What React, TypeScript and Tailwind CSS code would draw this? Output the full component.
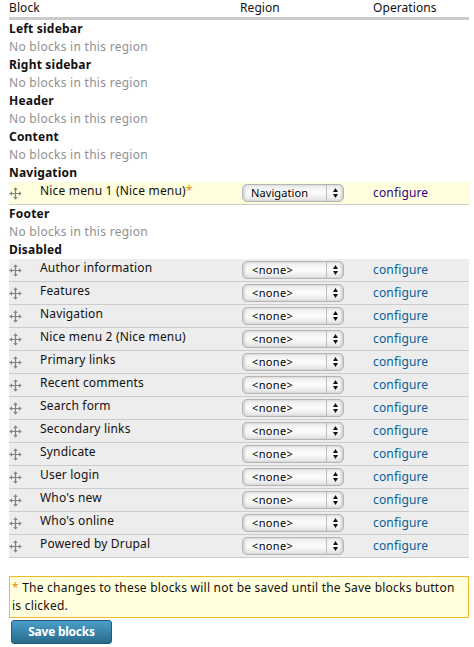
type RowProps = {
  name: string;
  region: string;
  changed?: boolean;
};

const emptyRegions = ["Left sidebar", "Right sidebar", "Header", "Content"];

const disabledBlocks = [
  "Author information",
  "Features",
  "Navigation",
  "Nice menu 2 (Nice menu)",
  "Primary links",
  "Recent comments",
  "Search form",
  "Secondary links",
  "Syndicate",
  "User login",
  "Who's new",
  "Who's online",
  "Powered by Drupal",
];

function DragHandle() {
  return (
    <svg className="mt-[5px] h-[13px] w-[13px] shrink-0" viewBox="0 0 13 13" fill="none">
      <path d="M6.5 1v11M1 6.5h11" stroke="#808080" strokeWidth="1.2" />
      <path
        d="M4.3 3L6.5 0.3l2.2 2.7zM4.3 10l2.2 2.7 2.2-2.7zM3 4.3L0.3 6.5l2.7 2.2zM10 4.3l2.7 2.2-2.7 2.2z"
        fill="#858585"
      />
    </svg>
  );
}

function RegionSelect({ value }: { value: string }) {
  const textStyle = value === "Navigation" ? "pl-[8px] tracking-[0.1px]" : "pl-[9px] tracking-[0.35px]";
  return (
    <div className="mt-[2px] flex h-[18px] w-[102px] overflow-hidden rounded-[5px] border border-[#b5b5b5] bg-linear-to-b from-[#ebebeb] via-[#fdfdfd] to-[#e2e2e2] shadow-[inset_2px_0_2px_#d2d2d2,inset_-2px_0_2px_#d2d2d2]">
      <span className={`w-[83px] text-[11px] leading-[15px] text-black ${textStyle}`}>{value}</span>
      <span className="flex flex-1 items-center justify-center border-l border-[#bcbcbc]">
        <svg className="h-[10px] w-[5px]" viewBox="0 0 5 10">
          <path d="M2.5 0L5 4H0zM0 6h5L2.5 10z" fill="#111" />
        </svg>
      </span>
    </div>
  );
}

function RegionTitle({ children }: { children: string }) {
  return <div className="h-[18px] text-[12px] leading-[18px] font-bold tracking-[0.2px] text-[#111]">{children}</div>;
}

function EmptyRegion({ title }: { title: string }) {
  return (
    <>
      <RegionTitle>{title}</RegionTitle>
      <div className="h-[18px] leading-[18px] tracking-[0.28px] text-[#909090]">No blocks in this region</div>
    </>
  );
}

function BlockRow({ name, region, changed = false }: RowProps) {
  return (
    <div
      className={`grid h-[23px] grid-cols-[31px_202px_131px_96px] border-b border-[#ccc] ${changed ? "bg-[#ffffdd]" : "bg-[#ededed]"}`}
    >
      <DragHandle />
      <div className="leading-[18px] tracking-[0.18px]">
        {name}
        {changed && <span className="text-[#e09010]">*</span>}
      </div>
      <RegionSelect value={region} />
      <a className={`leading-[22px] tracking-[0.15px] ${changed ? "text-[#330088]" : "text-[#0a5f99]"}`}>configure</a>
    </div>
  );
}

export default function App() {
  return (
    <div className="h-[647px] w-[474px] overflow-hidden bg-white pl-[9px] font-['Noto_Sans',sans-serif] text-[12px] tracking-[0.23px] text-[#111]">
      <div className="w-[460px]">
        <div className="grid h-[20px] grid-cols-[231px_133px_96px] border-b-3 border-[#ccc] leading-[16px] tracking-[0.08px]">
          <div>Block</div>
          <div>Region</div>
          <div>Operations</div>
        </div>
        {emptyRegions.map((title) => (
          <EmptyRegion key={title} title={title} />
        ))}
        <RegionTitle>Navigation</RegionTitle>
        <BlockRow name="Nice menu 1 (Nice menu)" region="Navigation" changed />
        <EmptyRegion title="Footer" />
        <RegionTitle>Disabled</RegionTitle>
        {disabledBlocks.map((name) => (
          <BlockRow key={name} name={name} region="<none>" />
        ))}
        <div className="mt-[18px] h-[42px] border border-[#efba2c] bg-[#ffffdd] px-[2px] py-[2px] leading-[18px]">
          <span className="text-[#e09010]">*</span> The changes to these blocks will not be saved until the Save blocks button
          <br />
          is clicked.
        </div>
        <button className="mt-[2px] ml-[2px] block h-[24px] w-[101px] rounded-[3px] border border-[#215d75] bg-linear-to-b from-[#4a9fca] to-[#296b8b] text-[12px] leading-[22px] font-bold tracking-[-0.25px] text-white">
          Save blocks
        </button>
      </div>
    </div>
  );
}
